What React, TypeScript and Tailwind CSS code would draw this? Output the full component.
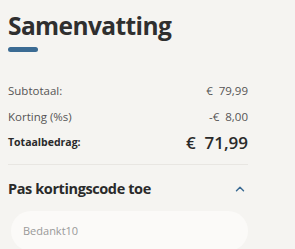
import { ChevronUp } from 'lucide-react'

export default function App() {
  return (
    <div className="w-[295px] h-[249px] overflow-hidden bg-[#f5f4f1] font-['Open_Sans',sans-serif]">
      <div className="w-[240px] ml-2 pt-[9px]">
        <h1 className="text-[24.5px] leading-[34px] font-bold text-[#2f2f2f] tracking-[-0.6px]">
          Samenvatting
        </h1>
        <div className="mt-[4px] w-[30px] h-[5px] rounded-full bg-[#3b6b93]" />

        <div className="mt-[26px] flex flex-col text-[11.5px] text-[#555]">
          <div className="flex justify-between h-[26px] items-center">
            <span>Subtotaal:</span>
            <span>€&nbsp; 79,99</span>
          </div>
          <div className="flex justify-between h-[26px] items-center">
            <span>Korting (%s)</span>
            <span>-€&nbsp; 8,00</span>
          </div>
          <div className="flex justify-between h-[26px] items-center text-[#2a2a2a]">
            <span className="font-bold text-[10.5px]">Totaalbedrag:</span>
            <span className="font-semibold text-[17px]">€&nbsp; 71,99</span>
          </div>
        </div>

        <div className="mt-[8px] h-px bg-[#e8e6e2]" />

        <div className="mt-[14px] flex justify-between items-center h-[20px]">
          <h2 className="text-[14.5px] font-bold text-[#2a2a2a] tracking-[-0.4px]">Pas kortingscode toe</h2>
          <ChevronUp className="w-[14px] h-[14px] text-[#3b6b93] mr-[1px]" strokeWidth={2.5} />
        </div>

        <div className="mt-[12px] ml-[3px] h-[40px] rounded-full bg-[#fbfaf8] flex items-center pl-[12px] text-[11px] text-[#999]">
          Bedankt10
        </div>
      </div>
    </div>
  )
}
